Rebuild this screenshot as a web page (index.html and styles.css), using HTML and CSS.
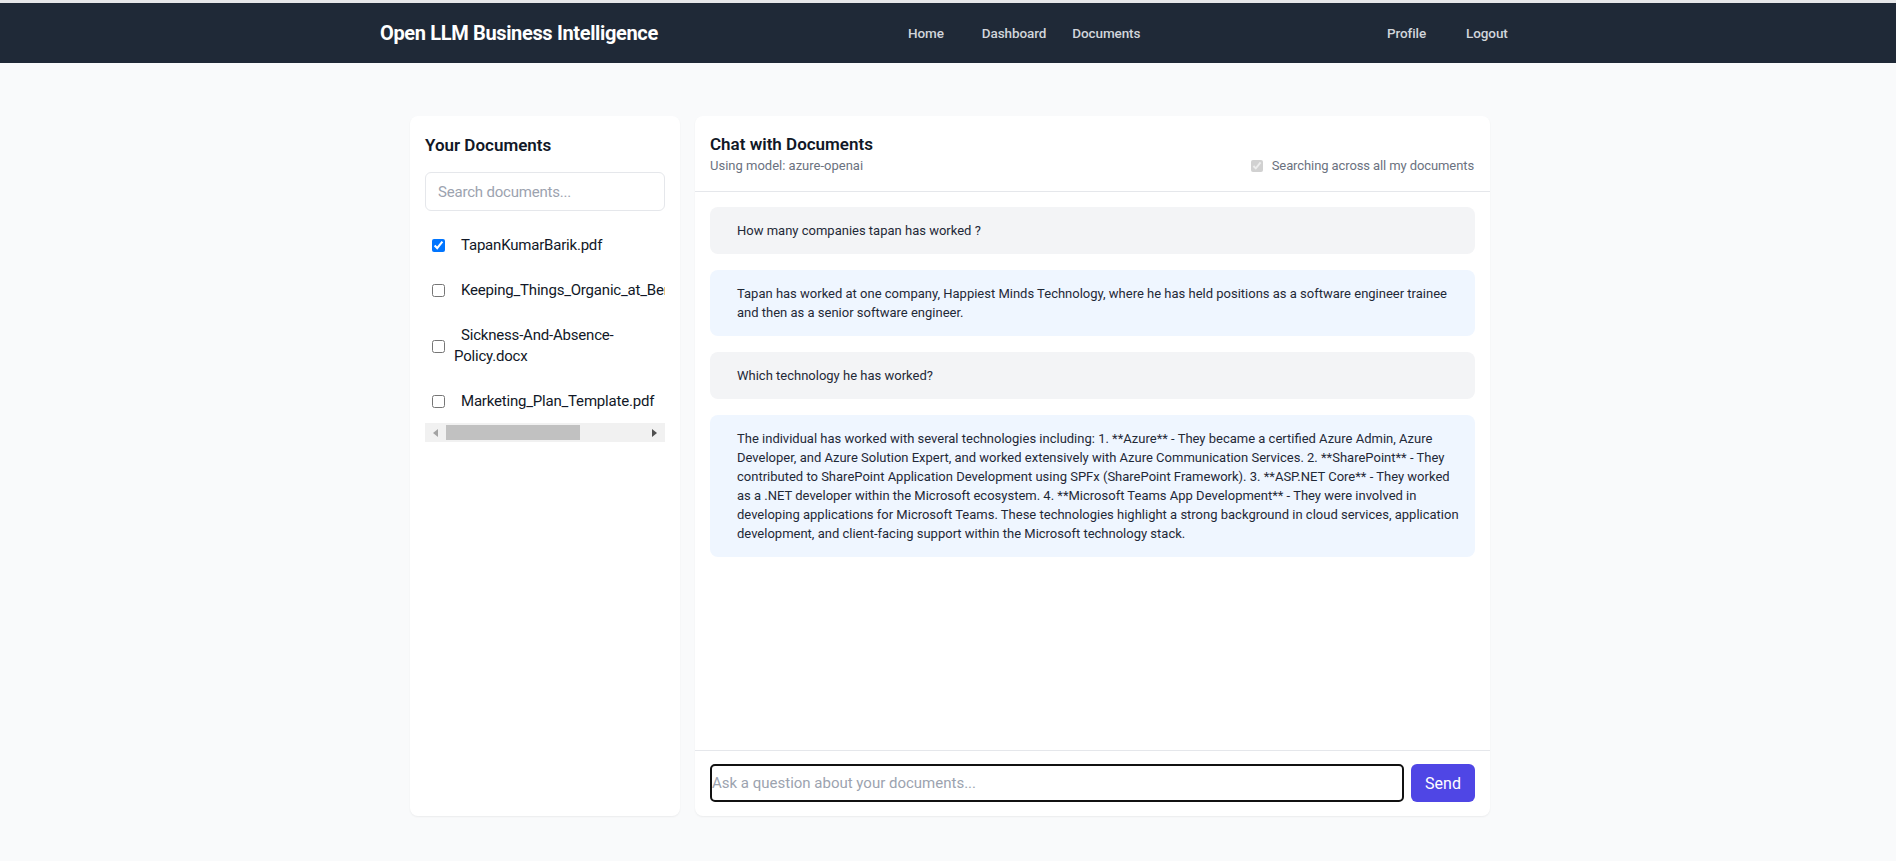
FILE: index.html
```html
<!DOCTYPE html>
<html lang="en">
<head>
<meta charset="utf-8">
<title>Open LLM Business Intelligence</title>
<link rel="stylesheet" href="styles.css">
</head>
<body>
<nav class="navbar">
  <div class="nav-inner">
    <div class="brand">Open LLM Business Intelligence</div>
    <div class="nav-main">
      <a class="nav-link" href="#">Home</a>
      <a class="nav-link nl-dash" href="#">Dashboard</a>
      <a class="nav-link nl-docs" href="#">Documents</a>
    </div>
    <div class="nav-user">
      <a class="nav-link" href="#">Profile</a>
      <a class="nav-link nl-logout" href="#">Logout</a>
    </div>
  </div>
</nav>

<main class="layout">
  <aside class="card docs-card">
    <h2 class="card-title">Your Documents</h2>
    <input class="search" type="text" placeholder="Search documents...">
    <div class="doc-scroll">
      <ul class="doc-list">
        <li class="doc-item"><input type="checkbox" class="doc-check" checked><span class="doc-name">TapanKumarBarik.pdf</span></li>
        <li class="doc-item"><input type="checkbox" class="doc-check"><span class="doc-name nowrap">Keeping_Things_Organic_at_Berkeley_Farms_2023.pdf</span></li>
        <li class="doc-item"><input type="checkbox" class="doc-check"><span class="doc-name">Sickness-And-Absence-Policy.docx</span></li>
        <li class="doc-item"><input type="checkbox" class="doc-check"><span class="doc-name">Marketing_Plan_Template.pdf</span></li>
      </ul>
    </div>
    <div class="hscroll">
      <span class="arrow arrow-left"></span>
      <span class="thumb"></span>
      <span class="arrow arrow-right"></span>
    </div>
  </aside>

  <section class="card chat-card">
    <header class="chat-head">
      <div class="chat-head-left">
        <h2 class="card-title chat-title">Chat with Documents</h2>
        <div class="model">Using model: azure-openai</div>
      </div>
      <label class="all-docs"><input type="checkbox" class="all-check" checked disabled><span>Searching across all my documents</span></label>
    </header>

    <div class="messages">
      <div class="msg msg-user">How many companies tapan has worked ?</div>
      <div class="msg msg-ai">Tapan has worked at one company, Happiest Minds Technology, where he has held positions as a software engineer trainee and then as a senior software engineer.</div>
      <div class="msg msg-user">Which technology he has worked?</div>
      <div class="msg msg-ai">The individual has worked with several technologies including: 1. **Azure** - They became a certified Azure Admin, Azure Developer, and Azure Solution Expert, and worked extensively with Azure Communication Services. 2. **SharePoint** - They contributed to SharePoint Application Development using SPFx (SharePoint Framework). 3. **ASP.NET Core** - They worked as a .NET developer within the Microsoft ecosystem. 4. **Microsoft Teams App Development** - They were involved in developing applications for Microsoft Teams. These technologies highlight a strong background in cloud services, application development, and client-facing support within the Microsoft technology stack.</div>
    </div>

    <footer class="chat-foot">
      <input class="ask" type="text" placeholder="Ask a question about your documents...">
      <button class="send" type="button">Send</button>
    </footer>
  </section>
</main>
</body>
</html>
```

FILE: styles.css
```css
* { box-sizing: border-box; }

html, body {
  margin: 0;
  padding: 0;
}

body {
  background: #f9fafb;
  font-family: Roboto, "Liberation Sans", sans-serif;
  color: #111827;
  height: 861px;
  overflow: hidden;
}

/* ---------- navbar ---------- */
.navbar {
  border-top: 3px solid #e6e7e9;
  background: #1f2937;
  height: 63px;
}

.nav-inner {
  width: 1152px;
  margin: 0 auto;
  padding: 0 8px;
  height: 60px;
  display: flex;
  align-items: center;
}

.brand {
  width: 528px;
  color: #ffffff;
  font-size: 20px;
  font-weight: 700;
  letter-spacing: -0.35px;
}

.nav-main {
  width: 479px;
  display: flex;
}

.nav-user {
  display: flex;
}

.nav-link {
  color: #d1d5db;
  font-size: 13.5px;
  font-weight: 500;
  text-decoration: none;
  line-height: 20px;
  letter-spacing: -0.1px;
}

.nl-dash { margin-left: 38px; }
.nl-docs { margin-left: 26px; }
.nl-logout { margin-left: 40px; }

/* ---------- layout ---------- */
.layout {
  width: 1080px;
  margin: 53px 0 0 calc(50% - 538px);
  display: grid;
  grid-template-columns: 270px 795px;
  gap: 15px;
}

.card {
  background: #ffffff;
  border-radius: 8px;
  box-shadow: 0 1px 2px rgba(0, 0, 0, 0.06);
  height: 700px;
}

.card-title {
  margin: 0;
  font-size: 17px;
  font-weight: 600;
  line-height: 28px;
  color: #111827;
}

/* ---------- documents card ---------- */
.docs-card {
  padding: 15px;
}

.search {
  display: block;
  width: 240px;
  height: 39px;
  margin-top: 13px;
  padding: 0 12px;
  border: 1px solid #e5e7eb;
  border-radius: 6px;
  font-family: inherit;
  font-size: 15px;
  letter-spacing: -0.2px;
  color: #111827;
  outline: none;
}

.search::placeholder { color: #9ca3af; }

.doc-scroll {
  width: 240px;
  overflow: hidden;
  margin-top: 12px;
}

.doc-list {
  list-style: none;
  margin: 0;
  padding: 0;
}

.doc-item {
  display: flex;
  align-items: center;
  padding: 12px 0;
  font-size: 15px;
  letter-spacing: -0.2px;
  line-height: 21px;
  color: #111827;
}

.doc-check {
  flex: none;
  width: 13px;
  height: 13px;
  margin: 0 0 0 7px;
}

.doc-name {
  margin-left: 9px;
  text-indent: 7px;
  min-width: 0;
}

.doc-name.nowrap { white-space: nowrap; }

.hscroll {
  width: 240px;
  height: 19px;
  margin-top: -1px;
  background: #f1f1f1;
  display: flex;
  align-items: center;
}

.thumb {
  display: block;
  width: 134px;
  height: 15px;
  background: #c1c1c1;
}

.arrow {
  display: block;
  width: 0;
  height: 0;
  border-top: 4px solid transparent;
  border-bottom: 4px solid transparent;
}

.arrow-left {
  margin-left: 8px;
  border-right: 5px solid #a3a3a3;
  margin-right: 8px;
}

.arrow-right {
  margin-left: auto;
  margin-right: 8px;
  border-left: 5px solid #505050;
}

/* ---------- chat card ---------- */
.chat-card {
  display: flex;
  flex-direction: column;
}

.chat-head {
  display: flex;
  justify-content: space-between;
  align-items: flex-end;
  padding: 16px 16px 15px 15px;
  border-bottom: 1px solid #e5e7eb;
}

.chat-title { line-height: 24px; }

.model {
  font-size: 13px;
  line-height: 20px;
  color: #6b7280;
}

.all-docs {
  display: flex;
  align-items: center;
  font-size: 13px;
  letter-spacing: -0.1px;
  line-height: 20px;
  color: #6b7280;
}

.all-check {
  width: 12px;
  height: 12px;
  margin: 0 9px 0 0;
}

.messages {
  flex: 1;
  padding: 15px;
  display: flex;
  flex-direction: column;
  gap: 16px;
  overflow: hidden;
}

.msg {
  border-radius: 8px;
  padding: 14px 15px 14px 27px;
  font-size: 13px;
  line-height: 19px;
  color: #1f2937;
}

.msg-user { background: #f3f4f6; }
.msg-ai { background: #eff6ff; }

.chat-foot {
  display: flex;
  gap: 7px;
  padding: 13px 15px 14px 15px;
  border-top: 1px solid #e5e7eb;
}

.ask {
  flex: 1;
  height: 38px;
  padding: 0;
  border: 2px solid #111111;
  border-radius: 5px;
  font-family: inherit;
  font-size: 15px;
  outline: none;
  background: #ffffff;
}

.ask::placeholder { color: #9ca3af; }

.send {
  width: 64px;
  height: 38px;
  border: none;
  border-radius: 6px;
  background: #4f46e5;
  color: #ffffff;
  font-family: inherit;
  font-size: 16px;
}
```
